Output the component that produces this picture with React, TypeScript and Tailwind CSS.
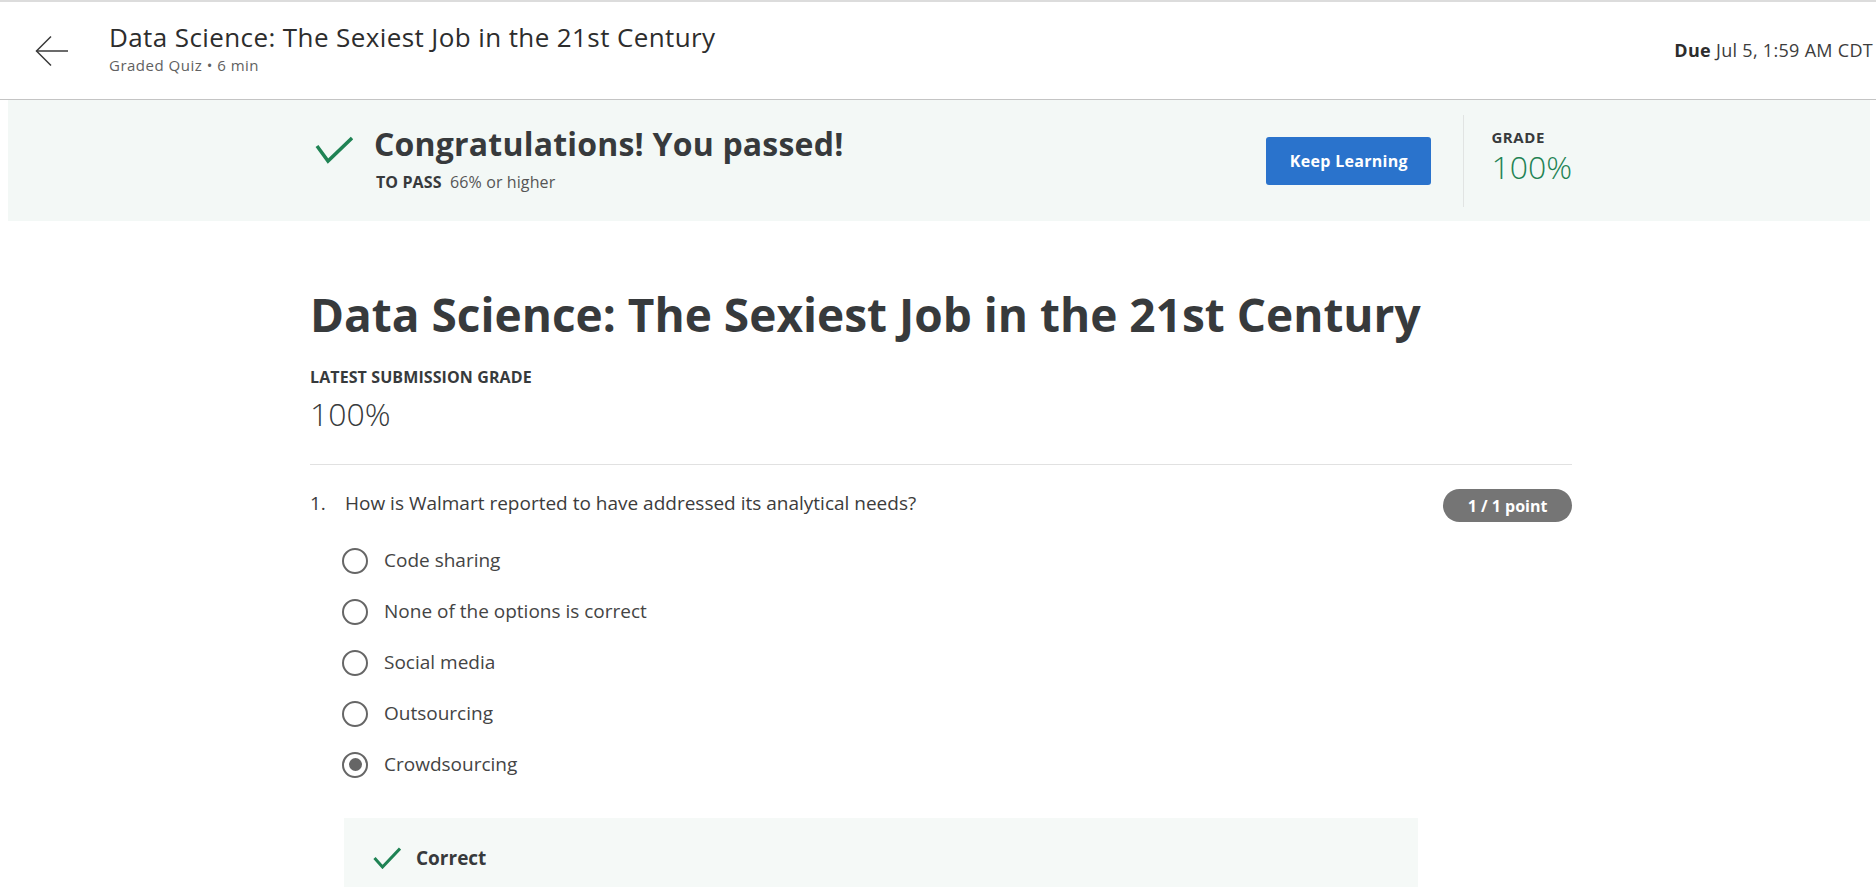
import React from 'react';

const options = [
  { label: 'Code sharing', checked: false },
  { label: 'None of the options is correct', checked: false },
  { label: 'Social media', checked: false },
  { label: 'Outsourcing', checked: false },
  { label: 'Crowdsourcing', checked: true },
];

const font = { fontFamily: '"Open Sans", "Liberation Sans", sans-serif' };

const Radio: React.FC<{ checked: boolean }> = ({ checked }) => (
  <span className="flex h-[26px] w-[26px] shrink-0 items-center justify-center rounded-full border-[2.5px] border-[#666]">
    {checked && <span className="h-[13px] w-[13px] rounded-full bg-[#666]" />}
  </span>
);

const Header: React.FC = () => (
  <header className="flex h-[100px] items-center border-t-2 border-b border-t-[#dcdcdc] border-b-[#c4c4c4] bg-white pl-[35px] pr-[3px]">
    <svg width="34" height="32" viewBox="0 0 34 32" fill="none" stroke="#3a3a3a" strokeWidth="1.5">
      <path d="M33 16H1.5" />
      <path d="M16 1.5L1.5 16L16 30.5" />
    </svg>
    <div className="ml-[40px] flex flex-col pb-[5px]">
      <span className="text-[26px] leading-[32px] tracking-[0.4px] text-[#2d2d2d]">
        Data Science: The Sexiest Job in the 21st Century
      </span>
      <span className="mt-[2px] text-[15px] leading-[20px] tracking-[0.5px] text-[#616161]">Graded Quiz • 6 min</span>
    </div>
    <div className="ml-auto text-[18px] tracking-[0.3px] text-[#3c3c3c]">
      <span className="font-bold text-[#2d2d2d]">Due</span> Jul 5, 1:59 AM CDT
    </div>
  </header>
);

const Banner: React.FC = () => (
  <div className="ml-2 mr-[6px] flex h-[121px] items-center bg-[#f3f8f6]">
    <div className="ml-[302px] flex w-[1262px] items-center justify-between">
      <div className="flex items-start">
        <svg className="ml-[5px] mt-[4px]" width="38" height="30" viewBox="0 0 38 30" fill="none" stroke="#1f8354" strokeWidth="3.5">
          <polyline points="2,12 13,27 37,4" />
        </svg>
        <div className="-mt-[5px] ml-[21px] flex flex-col">
          <span className="text-[32px] font-bold leading-[38px] tracking-[0.2px] text-[#373a3c]">Congratulations! You passed!</span>
          <span className="ml-[2px] mt-[9px] text-[16px] leading-[20px] tracking-[0.1px] text-[#555]">
            <span className="font-bold text-[#373a3c]">TO PASS</span>&nbsp; 66% or higher
          </span>
        </div>
      </div>
      <div className="flex items-center">
        <button className="h-[48px] w-[165px] rounded-[3px] bg-[#2a73cc] text-[16px] font-bold tracking-[0.3px] text-white">
          Keep Learning
        </button>
        <div className="ml-[32px] h-[92px] w-px bg-[#e1e4e3]" />
        <div className="-mt-[7px] ml-[27px] flex flex-col">
          <span className="text-[15px] font-bold leading-[20px] tracking-[0.6px] text-[#373a3c]">GRADE</span>
          <span className="text-[32px] font-light leading-[40px] text-[#1f8354]">100%</span>
        </div>
      </div>
    </div>
  </div>
);

const App: React.FC = () => {
  return (
    <div className="min-h-screen bg-white" style={font}>
      <Header />
      <Banner />
      <main className="ml-[310px] w-[1262px]">
        <h1 className="mt-[65px] text-[46px] font-bold leading-[56px] text-[#373a3c]">
          Data Science: The Sexiest Job in the 21st Century
        </h1>
        <div className="mt-[25px] text-[16px] font-bold leading-[20px] tracking-[0.1px] text-[#373a3c]">LATEST SUBMISSION GRADE</div>
        <div className="mt-[7px] text-[32px] font-light leading-[40px] text-[#373a3c]">100%</div>
        <div className="mt-[30px] border-b border-[#e1e1e1]" />

        <div className="mt-[24px] flex items-center justify-between">
          <div className="flex pb-[6px] text-[19px] leading-[24px] text-[#3c3c3c]">
            <span className="w-[35px]">1.</span>
            <span>How is Walmart reported to have addressed its analytical needs?</span>
          </div>
          <span className="flex h-[33px] w-[129px] items-center justify-center rounded-full bg-[#757575] text-[16px] font-bold text-white">
            1 / 1 point
          </span>
        </div>

        <div className="mt-[13px] flex flex-col pl-[32px]">
          {options.map((o) => (
            <label key={o.label} className="flex h-[51px] items-center gap-[16px] text-[19px] text-[#444]">
              <Radio checked={o.checked} />
              <span>{o.label}</span>
            </label>
          ))}
        </div>

        <div className="ml-[34px] mt-[28px] flex w-[1074px] items-center bg-[#f5f9f7] py-[28px] pl-[29px]">
          <svg width="28" height="22" viewBox="0 0 28 22" fill="none" stroke="#1f8354" strokeWidth="3">
            <polyline points="1.5,11 9.5,20 27,1.5" />
          </svg>
          <span className="ml-[15px] text-[19px] font-bold leading-[24px] text-[#373a3c]">Correct</span>
        </div>
      </main>
    </div>
  );
};

export default App;
